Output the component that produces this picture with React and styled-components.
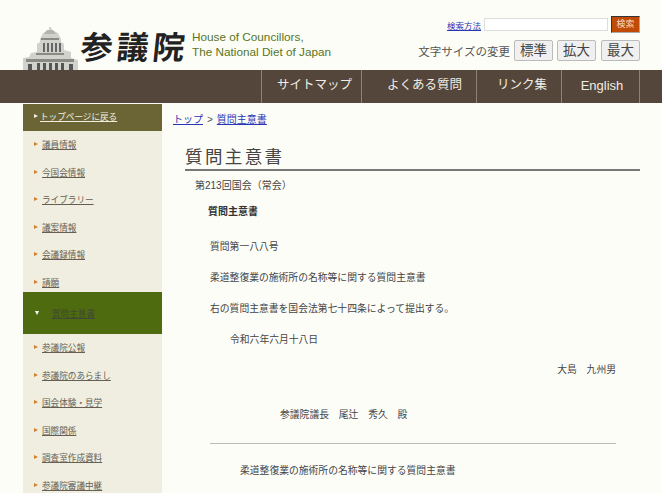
import React from "react";
import styled, { createGlobalStyle } from "styled-components";

const Global = createGlobalStyle`
  html, body { margin: 0; padding: 0; background: #fdfdf8; overflow: hidden; }
  body { font-family: "Liberation Sans", "Noto Sans CJK JP", sans-serif; color: #444; }
`;
const Page = styled.div`width: 662px; height: 493px; overflow: hidden;`;
const Header = styled.header`height: 70px; display: flex; justify-content: space-between; box-sizing: border-box; padding-left: 23px;`;
const Brand = styled.div`display: flex; align-items: flex-end; width: 320px;`;
const Building = styled.svg`width: 55px; height: 44px; display: block; flex: none;`;
const Kanji = styled.div`
  font-family: "Noto Sans CJK JP", sans-serif; font-weight: 700; font-size: 32px; line-height: 32px; color: #222;
  letter-spacing: 4px; margin: 0 0 9px 3px; width: 108px; white-space: nowrap; flex: none; transform: skewX(-6deg);
`;
const Tagline = styled.div`font-size: 11.75px; line-height: 14.5px; color: #57761f; margin: 0 0 11px 3px; white-space: nowrap;`;
const Tools = styled.div`display: flex; flex-direction: column; align-items: flex-end; padding: 16px 22px 0 0;`;
const SearchRow = styled.div`display: flex; align-items: center; height: 17px;`;
const SmallLink = styled.a`font-size: 8.5px; color: #2a35b5; text-decoration: underline; margin-right: 3px;`;
const SearchInput = styled.div`width: 122px; height: 11px; background: #fff; border: 1px solid #ddd; margin-right: 3px;`;
const SearchButton = styled.div`
  width: 29px; height: 17px; background: #c04a06; color: #f5ddc8; font-size: 9px; line-height: 15px; text-align: center;
  border-top: 1px solid #333; border-left: 1px solid #333; border-right: 1px solid #aaa; border-bottom: 1px solid #aaa; box-sizing: border-box;
`;
const SizeRow = styled.div`display: flex; align-items: center; margin-top: 7px; height: 21px;`;
const SizeLabel = styled.span`font-size: 11.5px; color: #555; margin-right: 4px; white-space: nowrap;`;
const SizeButton = styled.div`
  height: 21px; box-sizing: border-box; background: #f0f0f0; border: 1px solid #bbb; border-radius: 2px; font-size: 13.5px;
  line-height: 19px; text-align: center; color: #444; width: ${p => p.$w}px; margin-left: ${p => p.$ml || 0}px;
`;
const NavBar = styled.nav`height: 33px; background: #54463a; display: flex; padding-left: 261px; box-sizing: border-box; margin-bottom: 1px;`;
const NavItem = styled.div`
  width: ${p => p.$w}px; box-sizing: border-box; border-left: 1px solid #8d8276; color: #f1ece2; font-size: ${p => p.$fs || 12.5}px;
  line-height: 31px; text-align: center; white-space: nowrap; padding-left: ${p => p.$pl}px; ${p => p.$last ? "border-right: 1px solid #8d8276;" : ""}
`;
const Body = styled.div`display: flex; padding-left: 23px;`;
const Side = styled.aside`width: 139px; flex: none; background: #f0eee0;`;
const BackItem = styled.div`
  height: 27px; background: #6b6536; color: #f2efe0; font-size: 8.6px; display: flex; align-items: center; padding: 0 0 3px 11px; box-sizing: border-box;
  a { text-decoration: underline; margin-left: 2px; }
`;
const SideItem = styled.div`
  height: 27.5px; font-size: 8.6px; color: #665e52; display: flex; align-items: center; padding: 0 0 1px 11px; box-sizing: border-box;
  a { text-decoration: underline; margin-left: 4px; }
`;
const Arrow = styled.i`width: 0; height: 0; border-left: 4px solid ${p => p.$c}; border-top: 2.5px solid transparent; border-bottom: 2.5px solid transparent;`;
const ActiveItem = styled.div`
  height: 42px; margin: -4px 0 0; background: #4f6b10; color: #3f4a30; font-size: 8.6px; display: flex; align-items: center; padding-left: 12px; box-sizing: border-box;
  a { text-decoration: underline; margin-left: 13px; }
`;
const Down = styled.i`width: 0; height: 0; border-top: 4px solid #fff; border-left: 2.5px solid transparent; border-right: 2.5px solid transparent;`;
const Main = styled.main`flex: 1; padding-left: 11px; padding-right: 22px; min-width: 0;`;
const Crumbs = styled.div`font-size: 10px; line-height: 14px; padding-top: 9px; color: #555; a { color: #2a35b5; text-decoration: underline; } span { margin: 0 4px; }`;
const Title = styled.h1`
  margin: 19px 0 0 12px; font-family: "Liberation Serif", "Noto Sans CJK JP", serif; font-weight: 400; font-size: 17.5px; line-height: 23px;
  letter-spacing: 2.4px; color: #444; border-bottom: 2px solid #777; height: 23px;
`;
const Session = styled.div`font-size: 10px; line-height: 14px; margin: 8px 0 0 22px;`;
const Strong = styled.div`font-size: 10px; font-weight: 700; line-height: 14px; margin: 12px 0 0 35px; color: #333;`;
const Line = styled.div`font-size: 9.8px; line-height: 14px; margin: ${p => p.$t}px 0 0 ${p => p.$l}px; color: #444; text-align: ${p => p.$r ? "right" : "left"}; padding-right: ${p => p.$r ? 24 : 0}px;`;
const Rule = styled.hr`border: 0; border-top: 1px solid #bbb; margin: 21px 24px 0 37px;`;

const top = ["議員情報", "今国会情報", "ライブラリー", "議案情報", "会議録情報", "請願"];
const bottom = ["参議院公報", "参議院のあらまし", "国会体験・見学", "国際関係", "調査室作成資料", "参議院審議中継"];

export default function App() {
  return (
    <Page>
      <Global />
      <Header>
        <Brand>
          <Building viewBox="0 0 55 44">
            <path d="M26 1h2l1 3 6 3 3 6v3l3 2v6l7 2v6l7 2v11H0V32l6-1 2-4 6-1v-8l3-2v-3l3-6 6-3z" fill="#d2d2cc" />
            <path d="M24 4h6l3 4H21z" fill="#b4b4ae" />
            <path d="M18 12h18v2H18zM13 27h28v2H13zM3 33h48v3H3z" fill="#8a8a84" />
            <path d="M20 17h2v9h-2zM24 17h2v9h-2zM28 17h2v9h-2zM32 17h2v9h-2zM36 17h2v9h-2z" fill="#666" />
            <path d="M14 37h3v7h-3zM20 37h3v7h-3zM26 37h3v7h-3zM32 37h3v7h-3zM38 37h3v7h-3zM5 38h4v6H5zM46 38h4v6h-4z" fill="#555" />
          </Building>
          <Kanji>参議院</Kanji>
          <Tagline>House of Councillors,<br />The National Diet of Japan</Tagline>
        </Brand>
        <Tools>
          <SearchRow>
            <SmallLink>検索方法</SmallLink>
            <SearchInput />
            <SearchButton>検索</SearchButton>
          </SearchRow>
          <SizeRow>
            <SizeLabel>文字サイズの変更</SizeLabel>
            <SizeButton $w={39}>標準</SizeButton>
            <SizeButton $w={39} $ml={4}>拡大</SizeButton>
            <SizeButton $w={39} $ml={5}>最大</SizeButton>
          </SizeRow>
        </Tools>
      </Header>
      <NavBar>
        <NavItem $w={100} $pl={6}>サイトマップ</NavItem>
        <NavItem $w={115} $pl={11}>よくある質問</NavItem>
        <NavItem $w={85} $pl={6}>リンク集</NavItem>
        <NavItem $w={79} $pl={3} $fs={13} $last>English</NavItem>
      </NavBar>
      <Body>
        <Side>
          <BackItem><Arrow $c="#f2efe0" /><a>トップページに戻る</a></BackItem>
          {top.map(t => <SideItem key={t}><Arrow $c="#d5802a" /><a>{t}</a></SideItem>)}
          <ActiveItem><Down /><a>質問主意書</a></ActiveItem>
          {bottom.map(t => <SideItem key={t}><Arrow $c="#d5802a" /><a>{t}</a></SideItem>)}
        </Side>
        <Main>
          <Crumbs><a>トップ</a><span>&gt;</span><a>質問主意書</a></Crumbs>
          <Title>質問主意書</Title>
          <Session>第213回国会（常会）</Session>
          <Strong>質問主意書</Strong>
          <Line $t={21} $l={37}>質問第一八八号</Line>
          <Line $t={17} $l={37}>柔道整復業の施術所の名称等に関する質問主意書</Line>
          <Line $t={17} $l={37}>右の質問主意書を国会法第七十四条によって提出する。</Line>
          <Line $t={17} $l={57}>令和六年六月十八日</Line>
          <Line $t={16} $l={0} $r>大島　九州男</Line>
          <Line $t={31} $l={107}>参議院議長　尾辻　秀久　殿</Line>
          <Rule />
          <Line $t={20} $l={67}>柔道整復業の施術所の名称等に関する質問主意書</Line>
        </Main>
      </Body>
    </Page>
  );
}
